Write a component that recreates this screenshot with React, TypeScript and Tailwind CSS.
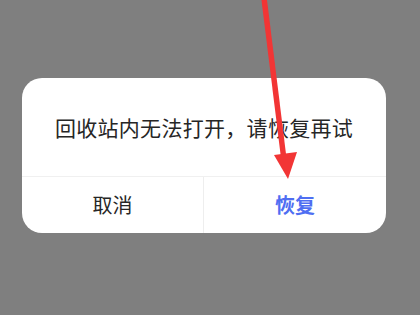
export default function App() {
  return (
    <div
      className="relative h-[315px] w-[420px] overflow-hidden bg-[#7f7f7f] pl-[22px] pt-[78px]"
      style={{ fontFamily: '"Noto Sans CJK SC", "Noto Sans", sans-serif' }}
    >
      {/* Dialog */}
      <div className="w-[364px] overflow-hidden rounded-[20px] bg-white">
        <div className="flex h-[98px] items-center justify-center pt-[2px] text-[21px] tracking-[0.3px] text-[#262626]">
          回收站内无法打开，请恢复再试
        </div>
        <div className="grid h-[57px] grid-cols-[182px_1fr] border-t border-[#f0f0f0]">
          <button className="border-r border-[#eeeeee] text-[20px] text-[#262626]">取消</button>
          <button className="text-[20px] font-bold text-[#4f6ef2]">恢复</button>
        </div>
      </div>

      {/* Annotation arrow */}
      <svg className="absolute left-0 top-0" width="420" height="315" viewBox="0 0 420 315">
        <line x1="264" y1="-2" x2="284" y2="160" stroke="#f23535" strokeWidth="5.5" />
        <polygon points="274,155 297,152 288,179" fill="#f23535" />
      </svg>
    </div>
  );
}
